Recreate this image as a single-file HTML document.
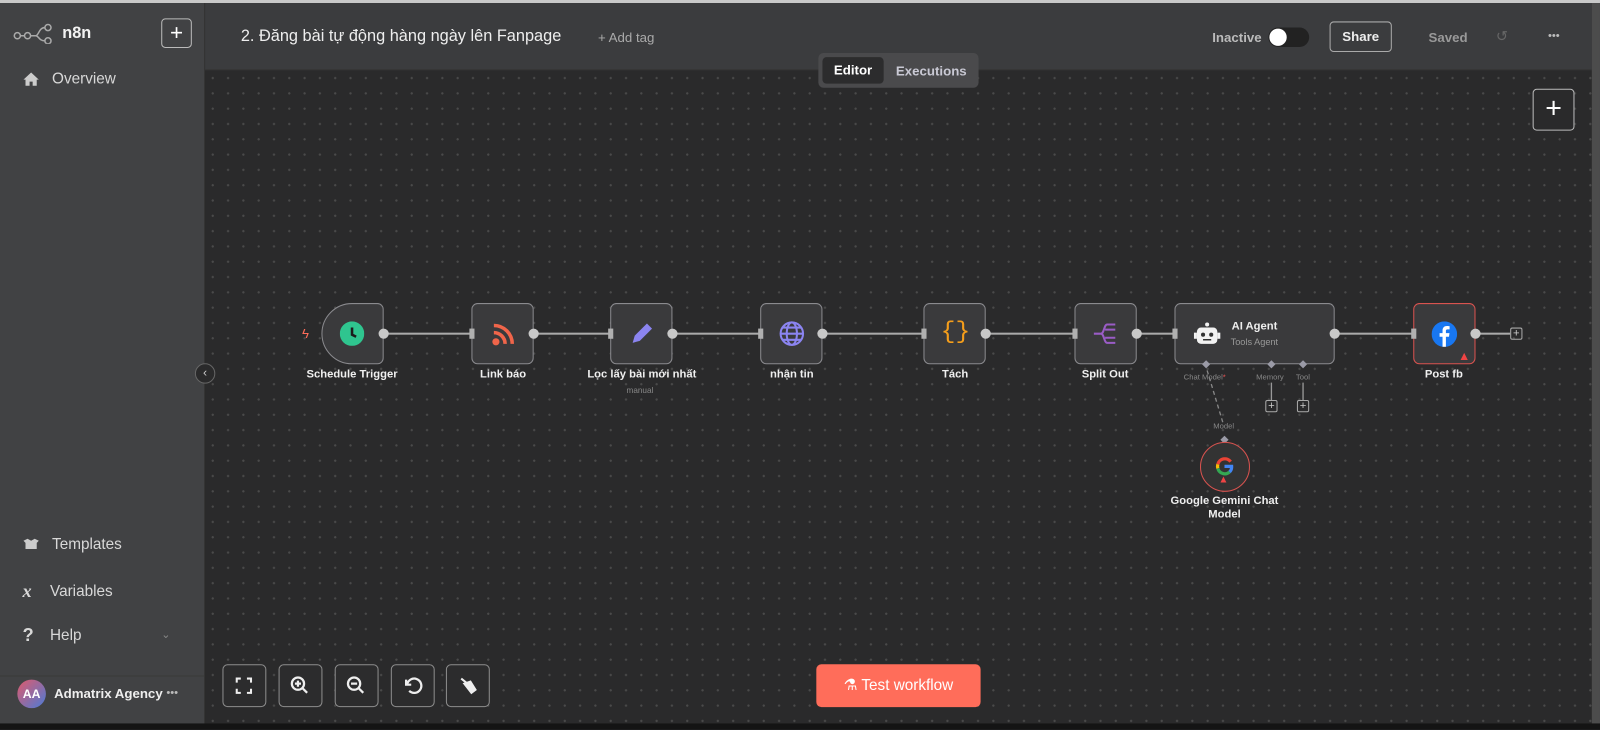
<!DOCTYPE html>
<html><head><meta charset="utf-8"><style>
*{box-sizing:border-box;margin:0;padding:0}
body{width:1600px;height:729px;overflow:hidden;background:#2a2a2b;font-family:"Liberation Sans","Noto Sans CJK SC",sans-serif;position:relative;color:#e8e8e8}
#wrap{position:absolute;left:0;top:0;width:1568px;height:715px;transform:scale(1.0204);transform-origin:0 0}
.abs{position:absolute}
#top{left:0;top:0;width:1568px;height:3px;background:#c9c9c9}
#side{left:0;top:3px;width:201px;height:706px;background:#414244;border-right:1px solid #333}
#hdr{left:201px;top:3px;width:1359px;height:66px;background:#3b3c3e;border-bottom:1px solid #333}
#canvas{left:201px;top:69px;width:1359px;height:640px;background-color:#2a2a2b;background-image:radial-gradient(#4a4a4a 1px,transparent 1.2px);background-size:15px 15px}
#rstrip{left:1560px;top:3px;width:8px;height:706px;background:#4c4c4c}
#bot{left:0;top:709px;width:1568px;height:6px;background:#141414}
.nav{position:absolute;left:22px;font-size:15px;color:#d8d8d8;display:flex;align-items:center;gap:12px}
.node{position:absolute;top:297px;width:61px;height:60px;border:1.5px solid #8a8a8e;border-radius:6px;background:#3a3a3c}
.lbl{position:absolute;top:361px;font-size:11px;font-weight:bold;color:#f0f0f0;text-align:center;width:160px;margin-left:-80px}
.line{position:absolute;top:326px;height:1.5px;background:#aaa}
.dot{position:absolute;top:322px;width:10px;height:10px;border-radius:50%;background:#c8c8c8;margin-left:-5px}
.in{position:absolute;top:322px;width:5px;height:10px;background:#b0b0b0}
.btn{position:absolute;top:651px;width:43px;height:42px;border:1.5px solid #8d8d8d;border-radius:5px;background:#2c2c2d}
.sq{position:absolute;width:12px;height:12px;border:1px solid #aaa;border-radius:2px;font-size:11px;line-height:10px;text-align:center;color:#ccc}
</style></head><body><div id="wrap">
<div id="top" class="abs"></div>
<div id="side" class="abs">
 <div class="abs" style="left:13px;top:20px">
  <svg width="42" height="20" viewBox="0 0 42 20"><g fill="none" stroke="#aaa" stroke-width="1.5"><circle cx="4" cy="12" r="3"/><circle cx="14" cy="12" r="3"/><circle cx="34" cy="4" r="3"/><circle cx="34" cy="17" r="3"/><path d="M7 12h4M17 12h5c3 0 3-8 9-8M22 12c3 0 3 5 9 5"/></g></svg></div>
 <div class="abs" style="left:61px;top:21px;font-size:16px;font-weight:bold;color:#f2f2f2">n8n</div>
 <div class="abs" style="left:158px;top:15px;width:30px;height:29px;border:1.5px solid #bbb;border-radius:4px;text-align:center;font-size:22px;line-height:25px;color:#fff">+</div>
 <div class="nav" style="top:66px"><svg width="17" height="15" viewBox="0 0 17 15"><path d="M8.5 1L1 8h2v6h4v-4h3v4h4V8h2z" fill="#ccc"/></svg>Overview</div>
 <div class="nav" style="top:522px"><svg width="17" height="13" viewBox="0 0 17 13"><path d="M1 3l4-2 3.5 2L12 1l4 2-2 2v6H3V5z" fill="#ccc"/></svg>Templates</div>
 <div class="nav" style="top:566px"><b style="font-family:'Liberation Serif';font-style:italic;font-size:18px;width:15px">x</b>Variables</div>
 <div class="nav" style="top:609px"><b style="font-size:18px;width:15px">?</b>Help</div>
 <div class="abs" style="left:158px;top:612px;font-size:11px;color:#888">⌄</div>
 <div class="abs" style="left:0;top:659px;width:200px;height:1px;background:#3a3a3a"></div>
 <div class="abs" style="left:17px;top:663px;width:28px;height:28px;border-radius:50%;background:linear-gradient(135deg,#e05a6b,#4b7bd8);font-size:12px;font-weight:bold;line-height:28px;text-align:center;color:#fff">AA</div>
 <div class="abs" style="left:53px;top:669px;font-size:13px;font-weight:bold;color:#eee">Admatrix Agency</div>
 <div class="abs" style="left:163px;top:670px;font-size:11px;color:#bbb">•••</div>
</div>
<div id="hdr" class="abs">
 <div class="abs" style="left:35px;top:24px;font-size:16px;color:#eee">2. Đăng bài tự động hàng ngày lên Fanpage</div>
 <div class="abs" style="left:385px;top:26px;font-size:13px;color:#aaa">+ Add tag</div>
 <div class="abs" style="left:987px;top:26px;font-size:13px;font-weight:bold;color:#bbb">Inactive</div>
 <div class="abs" style="left:1042px;top:24px;width:40px;height:19px;border-radius:10px;background:#222"><div class="abs" style="left:1px;top:1px;width:17px;height:17px;border-radius:50%;background:#fff"></div></div>
 <div class="abs" style="left:1102px;top:18px;width:61px;height:30px;border:1.5px solid #aaa;border-radius:4px;font-size:13px;font-weight:bold;text-align:center;line-height:27px;color:#eee">Share</div>
 <div class="abs" style="left:1199px;top:26px;font-size:13px;font-weight:bold;color:#999">Saved</div>
 <div class="abs" style="left:1265px;top:24px;font-size:14px;color:#666">↺</div>
 <div class="abs" style="left:1316px;top:26px;font-size:11px;color:#bbb">•••</div>
</div>
<div id="canvas" class="abs"></div>
<div class="abs" style="left:802px;top:52px;width:157px;height:34px;border-radius:5px;background:#4a4a4c">
 <div class="abs" style="left:4px;top:4px;width:60px;height:26px;border-radius:4px;background:#2c2c2d;font-size:13px;font-weight:bold;line-height:26px;text-align:center;color:#fff">Editor</div>
 <div class="abs" style="left:76px;top:10px;font-size:13px;font-weight:bold;color:#c9c9d4">Executions</div>
</div>
<div class="abs" style="left:1502px;top:87px;width:41px;height:41px;border:1.5px solid #bbb;border-radius:4px;font-size:28px;line-height:36px;text-align:center;color:#fff;background:#2a2a2b">+</div>
<div id="rstrip" class="abs"></div>

<div class="line" style="left:376px;width:86px"></div>
<div class="line" style="left:523px;width:75px"></div>
<div class="line" style="left:659px;width:86px"></div>
<div class="line" style="left:806px;width:99px"></div>
<div class="line" style="left:966px;width:87px"></div>
<div class="line" style="left:1114px;width:37px"></div>
<div class="line" style="left:1308px;width:77px"></div>
<div class="line" style="left:1446px;width:34px"></div>
<div class="sq" style="left:1480px;top:321px">+</div>

<div class="abs" style="left:296px;top:319px;color:#ff6d5a;font-size:13px">ϟ</div>
<div class="node" style="left:315px;border-radius:30px 6px 6px 30px"></div>
<svg class="abs" style="left:333px;top:315px" width="24" height="24"><circle cx="12" cy="12" r="12" fill="#2fc58f"/><path d="M12 6v7l4 2" stroke="#1c1c1c" stroke-width="2.5" fill="none"/></svg>
<div class="node" style="left:462px"></div>
<svg class="abs" style="left:481px;top:316px" width="24" height="24"><circle cx="5" cy="19" r="3.5" fill="#f0654a"/><path d="M3 10a11 11 0 0 1 11 11M3 3a18 18 0 0 1 18 18" stroke="#f0654a" stroke-width="3.5" fill="none"/></svg>
<div class="node" style="left:598px"></div>
<svg class="abs" style="left:616px;top:314px" width="26" height="26"><path d="M4 22l2-7L18 3l5 5L11 20z" fill="#8b84f0"/></svg>
<div class="node" style="left:745px"></div>
<svg class="abs" style="left:763px;top:314px" width="26" height="26" fill="none" stroke="#8b84f0" stroke-width="2"><circle cx="13" cy="13" r="11"/><ellipse cx="13" cy="13" rx="5" ry="11"/><path d="M2 13h22M4 7h18M4 19h18"/></svg>
<div class="node" style="left:905px"></div>
<div class="abs" style="left:922px;top:312px;font-size:24px;color:#f59e1b;font-family:'Liberation Mono'">{}</div>
<div class="node" style="left:1053px"></div>
<svg class="abs" style="left:1070px;top:315px" width="26" height="24" fill="none" stroke="#9a5cc6" stroke-width="2"><path d="M2 12h7M9 12c3 0 3-9 6-9h8M13 8h10M13 16h10M9 12c3 0 3 9 6 9h8"/></svg>
<div class="node" style="left:1151px;width:157px"></div>
<svg class="abs" style="left:1170px;top:315px" width="26" height="24"><rect x="3" y="6" width="20" height="16" rx="4" fill="#f2f2f2"/><rect x="0" y="11" width="3" height="6" fill="#f2f2f2"/><rect x="23" y="11" width="3" height="6" fill="#f2f2f2"/><circle cx="13" cy="3" r="2" fill="#f2f2f2"/><circle cx="9" cy="13" r="2" fill="#333"/><circle cx="17" cy="13" r="2" fill="#333"/><path d="M9 18h8" stroke="#333" stroke-width="1.5"/></svg>
<div class="abs" style="left:1207px;top:314px;font-size:11px;font-weight:bold;color:#eee">AI Agent</div>
<div class="abs" style="left:1206px;top:330px;font-size:9px;color:#999">Tools Agent</div>
<div class="node" style="left:1385px;border-color:#d9534f"></div>
<svg class="abs" style="left:1403px;top:315px" width="25" height="25"><circle cx="12.5" cy="12.5" r="12.5" fill="#1877f2"/><path d="M14 25V15h3l.5-3.5H14V9.5c0-1 .3-1.7 1.8-1.7h1.8V4.7c-.3 0-1.4-.2-2.6-.2-2.6 0-4.3 1.6-4.3 4.5v2.5H7.8V15h2.9v10z" fill="#fff"/></svg>
<div class="abs" style="left:1429px;top:342px;color:#ef4444;font-size:12px">▲</div>

<div class="dot" style="left:376px"></div>
<div class="dot" style="left:523px"></div>
<div class="dot" style="left:659px"></div>
<div class="dot" style="left:806px"></div>
<div class="dot" style="left:966px"></div>
<div class="dot" style="left:1114px"></div>
<div class="dot" style="left:1308px"></div>
<div class="dot" style="left:1446px"></div>
<div class="in" style="left:460px"></div><div class="in" style="left:596px"></div><div class="in" style="left:743px"></div><div class="in" style="left:903px"></div><div class="in" style="left:1051px"></div><div class="in" style="left:1149px"></div><div class="in" style="left:1383px"></div>

<div class="lbl" style="left:345px">Schedule Trigger</div>
<div class="lbl" style="left:493px">Link báo</div>
<div class="lbl" style="left:629px">Lọc lấy bài mới nhất</div>
<div class="abs" style="left:614px;top:378px;font-size:8px;color:#888">manual</div>
<div class="lbl" style="left:776px">nhận tin</div>
<div class="lbl" style="left:936px">Tách</div>
<div class="lbl" style="left:1083px">Split Out</div>
<div class="lbl" style="left:1415px">Post fb</div>

<svg class="abs" style="left:1150px;top:350px" width="150" height="100">
 <g fill="#9a9aa6"><path d="M32 3l4 4-4 4-4-4z"/><path d="M96 3l4 4-4 4-4-4z"/><path d="M127 3l4 4-4 4-4-4z"/><path d="M50 77l4 4-4 4-4-4z"/></g>
 <path d="M33 13L49 66" stroke="#888" stroke-width="1.3" stroke-dasharray="4 3"/>
 <path d="M96 25v17M127 25v17" stroke="#999" stroke-width="1.3"/>
</svg>
<div class="abs" style="left:1160px;top:365px;font-size:7.5px;color:#888">Chat Model<span style="color:#e55">*</span></div>
<div class="abs" style="left:1231px;top:365px;font-size:7.5px;color:#888">Memory</div>
<div class="abs" style="left:1270px;top:365px;font-size:7.5px;color:#888">Tool</div>
<div class="sq" style="left:1240px;top:392px">+</div>
<div class="sq" style="left:1271px;top:392px">+</div>
<div class="abs" style="left:1189px;top:413px;font-size:7.5px;color:#888">Model</div>
<div class="abs" style="left:1176px;top:433px;width:49px;height:49px;border-radius:50%;border:1.5px solid #d9534f;background:#333"></div>
<svg class="abs" style="left:1191px;top:448px" width="18" height="18" viewBox="0 0 18 18" fill="none" stroke-width="3.2"><path d="M15 4.5A7 7 0 0 0 2.5 7" stroke="#ea4335"/><path d="M2.5 7a7 7 0 0 0 0 4" stroke="#fbbc05"/><path d="M2.5 11A7 7 0 0 0 14 14.5" stroke="#34a853"/><path d="M14 14.5A7 7 0 0 0 16 9H9" stroke="#4285f4"/></svg>
<div class="abs" style="left:1194px;top:465px;color:#ef4444;font-size:10px">▲</div>
<div class="abs" style="left:1130px;top:485px;width:140px;text-align:center;font-size:11px;font-weight:bold;color:#eee;line-height:13px">Google Gemini Chat Model</div>

<div class="btn" style="left:218px"><svg width="40" height="40"><path d="M13 17v-4h4M23 13h4v4M27 23v4h-4M17 27h-4v-4" stroke="#eee" stroke-width="2" fill="none"/></svg></div>
<div class="btn" style="left:273px"><svg width="40" height="40"><circle cx="18" cy="18" r="6" stroke="#eee" stroke-width="2.2" fill="none"/><path d="M22 22l5 5M15 18h6M18 15v6" stroke="#eee" stroke-width="2.2"/></svg></div>
<div class="btn" style="left:328px"><svg width="40" height="40"><circle cx="18" cy="18" r="6" stroke="#eee" stroke-width="2.2" fill="none"/><path d="M22 22l5 5M15 18h6" stroke="#eee" stroke-width="2.2"/></svg></div>
<div class="btn" style="left:383px"><svg width="40" height="40"><path d="M14 14v5h5M15 19a7 7 0 1 1 2 6" stroke="#eee" stroke-width="2.2" fill="none"/></svg></div>
<div class="btn" style="left:437px"><svg width="40" height="40"><path d="M14 13l5 4M17 18l6-2 5 8-4 3z" stroke="#eee" stroke-width="2" fill="#eee"/></svg></div>
<div class="abs" style="left:800px;top:651px;width:161px;height:42px;border-radius:5px;background:#ff6d5a;font-size:15px;color:#fff;line-height:42px;text-align:center">⚗ Test workflow</div>
<div id="bot" class="abs"></div>
<div class="abs" style="left:191px;top:356px;width:20px;height:20px;border-radius:50%;background:#2a2a2b;border:1px solid #666;font-size:12px;line-height:17px;text-align:center;color:#ccc">‹</div>
</div></body></html>
